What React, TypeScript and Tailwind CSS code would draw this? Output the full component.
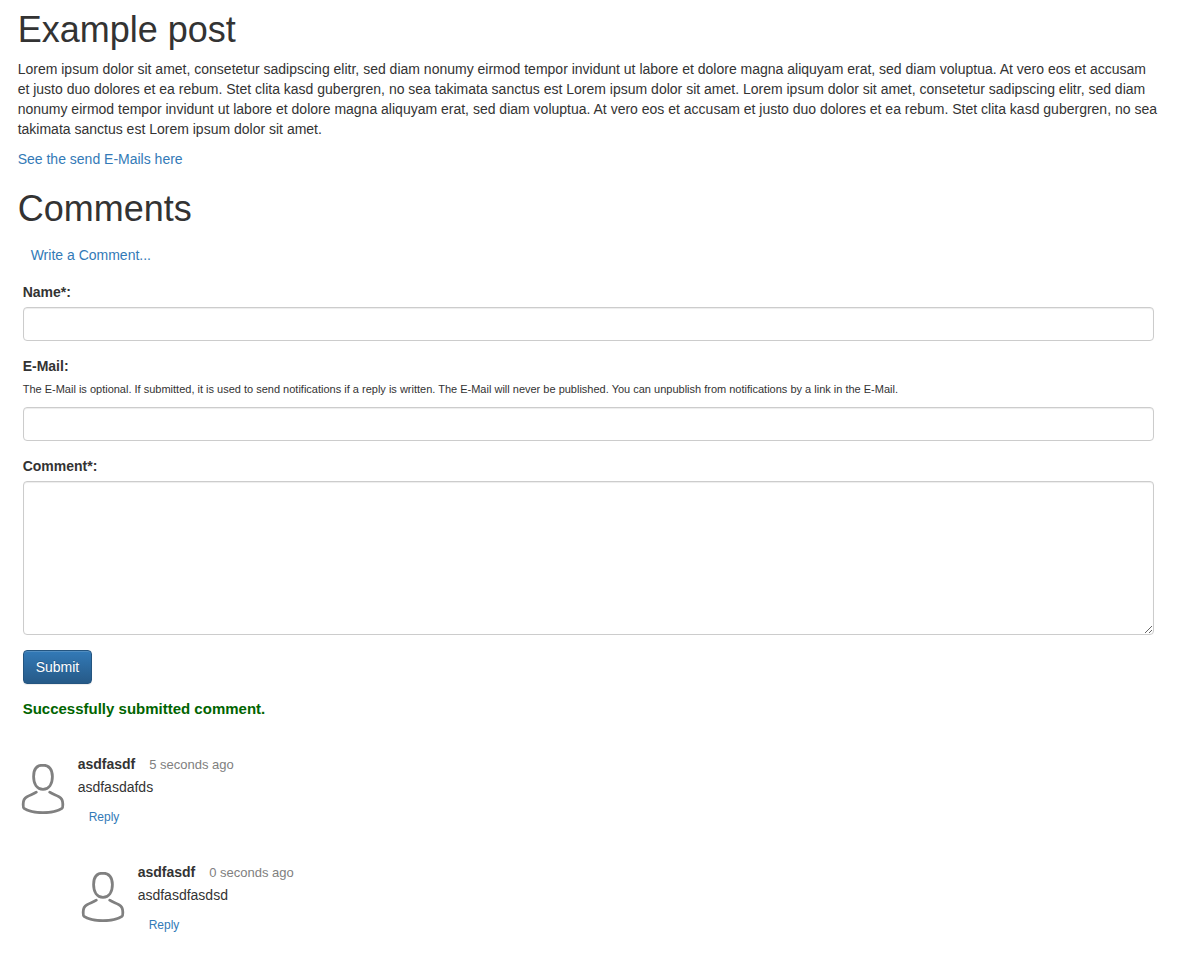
import React from "react";

const inputClass =
  "block w-full rounded border border-[#cccccc] bg-white px-3 py-1.5 text-sm leading-5 text-[#555555] shadow-[inset_0_1px_1px_rgba(0,0,0,0.075)] outline-none focus:border-[#66afe9]";

type CommentData = {
  name: string;
  age: string;
  text: string;
  replies?: CommentData[];
};

const comments: CommentData[] = [
  {
    name: "asdfasdf",
    age: "5 seconds ago",
    text: "asdfasdafds",
    replies: [{ name: "asdfasdf", age: "0 seconds ago", text: "asdfasdfasdsd" }],
  },
];

function Avatar() {
  return (
    <svg
      className="mt-2 h-[52px] w-[44px] shrink-0"
      viewBox="0 0 44 52"
      fill="none"
      stroke="#808080"
      strokeWidth="2.8"
      strokeLinecap="round"
      strokeLinejoin="round"
      aria-hidden="true"
    >
      <path d="M22 3.200C15.600 3.200 12.600 7.800 12.600 14.500C12.600 22 16 27.300 22 27.300C28 27.300 31.400 22 31.400 14.500C31.400 7.800 28.400 3.200 22 3.200Z" />
      <path d="M15.300 30.200C12.600 32 9 33 6 34.700C3 36.300 2.200 39 2.200 42C2.200 44 2.100 45.800 3 46.400C7 49 14 50.700 22 50.700C30 50.700 37 49 41 46.400C41.900 45.800 41.800 44 41.800 42C41.800 39 41 36.300 38 34.700C35 33 31.400 32 28.700 30.200" />
    </svg>
  );
}

function Comment({ comment }: { comment: CommentData }) {
  return (
    <li>
      <article className="flex gap-[13px] pl-[3px]">
        <Avatar />
        <div>
          <header className="flex items-baseline gap-3.5">
            <strong>{comment.name}</strong>
            <span className="text-[13px] text-[#808080]">{comment.age}</span>
          </header>
          <p className="mt-0.5">{comment.text}</p>
          <button type="button" className="mt-2.5 ml-[11px] block cursor-pointer text-xs leading-5 text-[#337ab7]">
            Reply
          </button>
        </div>
      </article>
      {comment.replies && (
        <ul className="mt-[35px] ml-[60px]">
          {comment.replies.map((reply) => (
            <Comment key={reply.text} comment={reply} />
          ))}
        </ul>
      )}
    </li>
  );
}

export default function App() {
  return (
    <main className="mx-auto w-[97%] pt-2.5 pb-6 font-['Liberation_Sans',Arial,sans-serif] text-sm leading-5 text-[#333333]">
      <h1 className="text-4xl leading-10 font-medium">Example post</h1>
      <p className="mt-[9px]">
        Lorem ipsum dolor sit amet, consetetur sadipscing elitr, sed diam nonumy eirmod tempor invidunt ut labore et
        dolore magna aliquyam erat, sed diam voluptua. At vero eos et accusam et justo duo dolores et ea rebum. Stet
        clita kasd gubergren, no sea takimata sanctus est Lorem ipsum dolor sit amet. Lorem ipsum dolor sit amet,
        consetetur sadipscing elitr, sed diam nonumy eirmod tempor invidunt ut labore et dolore magna aliquyam erat,
        sed diam voluptua. At vero eos et accusam et justo duo dolores et ea rebum. Stet clita kasd gubergren, no sea
        takimata sanctus est Lorem ipsum dolor sit amet.
      </p>
      <a href="#emails" className="mt-2.5 block w-fit text-[#337ab7]">
        See the send E-Mails here
      </a>

      <h1 className="mt-5 text-4xl leading-10 font-medium">Comments</h1>
      <button type="button" className="mt-4 ml-[13px] block cursor-pointer text-[#337ab7]">
        Write a Comment...
      </button>

      <form className="mt-[17px] px-[5px]" onSubmit={(e) => e.preventDefault()}>
        <label htmlFor="name" className="mb-[5px] block w-fit font-bold">
          Name*:
        </label>
        <input id="name" type="text" className={inputClass} />

        <label htmlFor="email" className="mt-[15px] block w-fit font-bold">
          E-Mail:
        </label>
        <p id="email-hint" className="mt-[3px] mb-2 text-[11px] leading-5">
          The E-Mail is optional. If submitted, it is used to send notifications if a reply is written. The E-Mail will
          never be published. You can unpublish from notifications by a link in the E-Mail.
        </p>
        <input id="email" type="email" aria-describedby="email-hint" className={inputClass} />

        <label htmlFor="comment" className="mt-[15px] mb-[5px] block w-fit font-bold">
          Comment*:
        </label>
        <textarea id="comment" rows={7} className={inputClass} />

        <button
          type="submit"
          className="mt-[15px] block cursor-pointer rounded border border-[#245580] bg-linear-to-b from-[#337ab7] to-[#265a88] px-3 py-1.5 text-white shadow-[inset_0_1px_0_rgba(255,255,255,0.15),0_1px_1px_rgba(0,0,0,0.075)] [text-shadow:0_-1px_0_rgba(0,0,0,0.2)]"
        >
          Submit
        </button>
        <p role="status" className="mt-[15px] text-[15px] font-bold text-[#006400]">
          Successfully submitted comment.
        </p>
      </form>

      <ul className="mt-[35px]">
        {comments.map((comment) => (
          <Comment key={comment.text} comment={comment} />
        ))}
      </ul>
    </main>
  );
}
